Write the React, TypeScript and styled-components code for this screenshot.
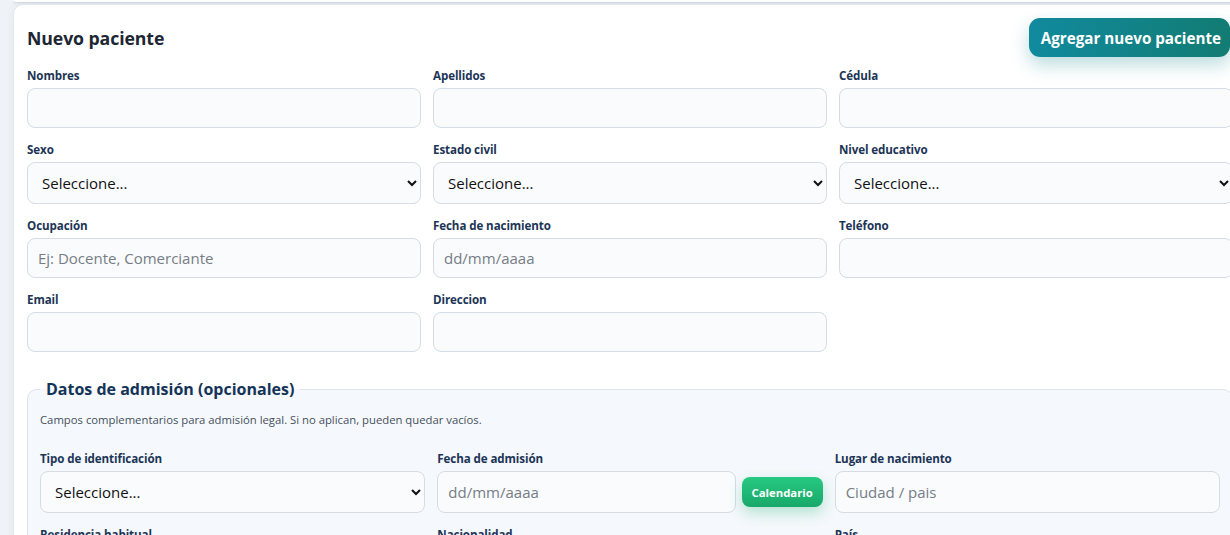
import React from 'react';
import styled, { createGlobalStyle } from 'styled-components';

const GlobalStyle = createGlobalStyle`
  html, body {
    margin: 0;
    padding: 0;
    background: #eff2f6;
    overflow: hidden;
    font-family: 'Open Sans', 'Noto Sans', sans-serif;
  }
  * { box-sizing: border-box; }
`;

const Page = styled.div`
  width: 1230px;
  height: 535px;
  padding-left: 13px;
  overflow: hidden;
`;

const PrevCardEdge = styled.div`
  width: 1240px;
  height: 3px;
  background: #ffffff;
  border-bottom: 1px solid #d3dbe5;
  border-radius: 0 0 10px 10px;
  box-shadow: 0 1px 3px rgba(30, 50, 80, 0.08);
`;

const Card = styled.section`
  width: 1234px;
  margin-top: 1px;
  background: #ffffff;
  border: 1px solid #e3e8ee;
  border-radius: 10px;
  padding: 13px 13px 14px;
  box-shadow: 0 2px 8px rgba(30, 50, 80, 0.06);
`;

const Header = styled.div`
  display: flex;
  align-items: center;
  justify-content: space-between;
  height: 39px;
  margin-bottom: 11px;
`;

const Title = styled.h2`
  margin: 0;
  font-size: 17.7px;
  font-weight: 700;
  color: #1d2733;
  letter-spacing: -0.1px;
`;

const PrimaryButton = styled.button`
  height: 39px;
  padding: 0 9px 0 12px;
  margin-right: 3px;
  border: none;
  border-radius: 11px;
  background: linear-gradient(90deg, #118a9e 0%, #127c73 100%);
  color: #ffffff;
  font-family: inherit;
  font-size: 15.2px;
  font-weight: 700;
  box-shadow: 0 8px 18px rgba(17, 130, 140, 0.28);
  cursor: pointer;
`;

const Grid = styled.div<{ $rowGap?: number }>`
  display: grid;
  grid-template-columns: repeat(3, 1fr);
  column-gap: 12px;
  row-gap: ${(p) => p.$rowGap ?? 14}px;
`;

const Field = styled.div`
  display: flex;
  flex-direction: column;
  min-width: 0;
`;

const Label = styled.label`
  font-size: 11.6px;
  line-height: 15px;
  font-weight: 700;
  color: #1c3556;
  margin-bottom: 5px;
  letter-spacing: -0.1px;
`;

const TextInput = styled.input<{ $h?: number }>`
  width: 100%;
  height: ${(p) => p.$h ?? 40}px;
  padding: 0 10px;
  border: 1px solid #d6dce4;
  border-radius: 8px;
  background: #f9fbfd;
  font-family: inherit;
  font-size: 15px;
  color: #1d2733;
  outline: none;
  &::placeholder {
    color: #777d85;
  }
`;

const Select = styled.select`
  width: 100%;
  height: 42px;
  padding: 0 8px 0 10px;
  border: 1px solid #d6dce4;
  border-radius: 8px;
  background: #f9fbfd;
  font-family: inherit;
  font-size: 15px;
  color: #111111;
  outline: none;
`;

const Fieldset = styled.fieldset`
  margin: 27px 0 0;
  padding: 14px 12px 14px;
  border: 1px solid #dde3ea;
  border-radius: 10px;
  background: #f5f8fc;
`;

const Legend = styled.legend`
  padding: 0 6px;
  font-size: 16px;
  font-weight: 700;
  color: #143457;
  line-height: 20px;
`;

const Hint = styled.p`
  margin: 0 0 24px;
  font-size: 11.3px;
  line-height: 14px;
  color: #46505c;
`;

const InlineRow = styled.div`
  display: flex;
  align-items: center;
  gap: 6px;
`;

const GreenButton = styled.button`
  flex: 0 0 81px;
  height: 30px;
  border: none;
  border-radius: 8px;
  background: linear-gradient(180deg, #27c981 0%, #18a86a 100%);
  color: #ffffff;
  font-family: inherit;
  font-size: 11.3px;
  font-weight: 700;
  box-shadow: 0 6px 14px rgba(34, 180, 110, 0.3);
  cursor: pointer;
`;

type Def = { label: string; kind: 'text' | 'select'; placeholder?: string };

const basics: Def[] = [
  { label: 'Nombres', kind: 'text' },
  { label: 'Apellidos', kind: 'text' },
  { label: 'Cédula', kind: 'text' },
  { label: 'Sexo', kind: 'select' },
  { label: 'Estado civil', kind: 'select' },
  { label: 'Nivel educativo', kind: 'select' },
  { label: 'Ocupación', kind: 'text', placeholder: 'Ej: Docente, Comerciante' },
  { label: 'Fecha de nacimiento', kind: 'text', placeholder: 'dd/mm/aaaa' },
  { label: 'Teléfono', kind: 'text' },
  { label: 'Email', kind: 'text' },
  { label: 'Direccion', kind: 'text' },
];

const Control = ({ def, h }: { def: Def; h?: number }) =>
  def.kind === 'select' ? (
    <Select defaultValue="">
      <option value="">Seleccione...</option>
    </Select>
  ) : (
    <TextInput $h={h} placeholder={def.placeholder} />
  );

export default function App() {
  return (
    <>
      <GlobalStyle />
      <Page>
        <PrevCardEdge />
        <Card>
          <Header>
            <Title>Nuevo paciente</Title>
            <PrimaryButton>Agregar nuevo paciente</PrimaryButton>
          </Header>

          <Grid>
            {basics.map((d) => (
              <Field key={d.label}>
                <Label>{d.label}</Label>
                <Control def={d} />
              </Field>
            ))}
          </Grid>

          <Fieldset>
            <Legend>Datos de admisión (opcionales)</Legend>
            <Hint>Campos complementarios para admisión legal. Si no aplican, pueden quedar vacíos.</Hint>
            <Grid $rowGap={14}>
              <Field>
                <Label>Tipo de identificación</Label>
                <Control def={{ label: 'tipo', kind: 'select' }} />
              </Field>
              <Field>
                <Label>Fecha de admisión</Label>
                <InlineRow>
                  <TextInput $h={42} placeholder="dd/mm/aaaa" />
                  <GreenButton>Calendario</GreenButton>
                </InlineRow>
              </Field>
              <Field>
                <Label>Lugar de nacimiento</Label>
                <TextInput $h={42} placeholder="Ciudad / pais" />
              </Field>
              <Field>
                <Label>Residencia habitual</Label>
                <TextInput $h={42} />
              </Field>
              <Field>
                <Label>Nacionalidad</Label>
                <TextInput $h={42} />
              </Field>
              <Field>
                <Label>País</Label>
                <TextInput $h={42} />
              </Field>
            </Grid>
          </Fieldset>
        </Card>
      </Page>
    </>
  );
}
